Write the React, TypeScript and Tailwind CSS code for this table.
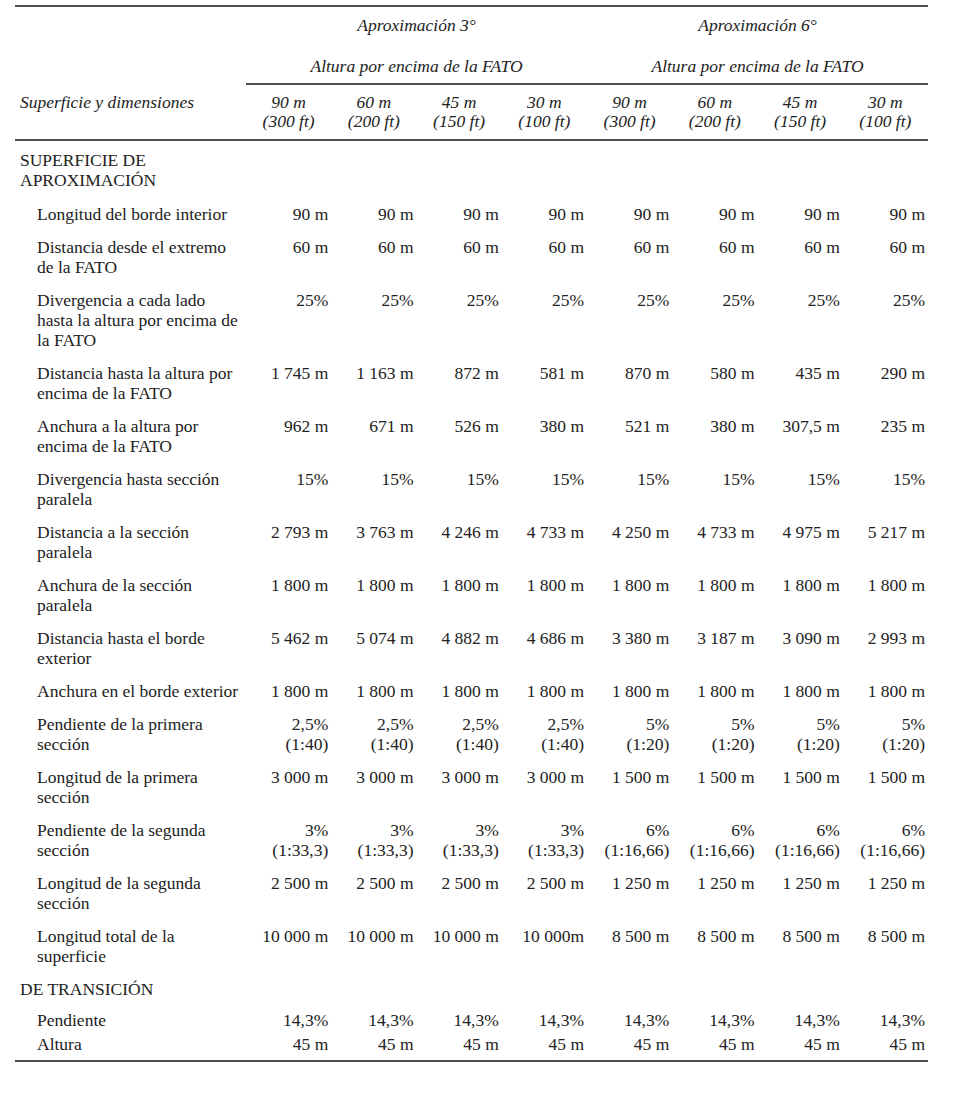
import React from 'react';

type Row = {
  label: React.ReactNode;
  values: React.ReactNode[];
};

const nb = (s: string) => s.replace(/ /g, '\u00a0');

const repeat = (a: string, b: string) => [a, a, a, a, b, b, b, b].map(nb);

const two = (a: string, b: string) => (
  <>
    {a}
    <br />
    {b}
  </>
);

const rows: Row[] = [
  { label: 'Longitud del borde interior', values: repeat('90 m', '90 m') },
  { label: two('Distancia desde el extremo', 'de la FATO'), values: repeat('60 m', '60 m') },
  {
    label: (
      <>
        Divergencia a cada lado
        <br />
        hasta la altura por encima de
        <br />
        la FATO
      </>
    ),
    values: repeat('25%', '25%'),
  },
  {
    label: two('Distancia hasta la altura por', 'encima de la FATO'),
    values: ['1 745 m', '1 163 m', '872 m', '581 m', '870 m', '580 m', '435 m', '290 m'].map(nb),
  },
  {
    label: two('Anchura a la altura por', 'encima de la FATO'),
    values: ['962 m', '671 m', '526 m', '380 m', '521 m', '380 m', '307,5 m', '235 m'].map(nb),
  },
  { label: two('Divergencia hasta sección', 'paralela'), values: repeat('15%', '15%') },
  {
    label: two('Distancia a la sección', 'paralela'),
    values: ['2 793 m', '3 763 m', '4 246 m', '4 733 m', '4 250 m', '4 733 m', '4 975 m', '5 217 m'].map(nb),
  },
  { label: two('Anchura de la sección', 'paralela'), values: repeat('1 800 m', '1 800 m') },
  {
    label: two('Distancia hasta el borde', 'exterior'),
    values: ['5 462 m', '5 074 m', '4 882 m', '4 686 m', '3 380 m', '3 187 m', '3 090 m', '2 993 m'].map(nb),
  },
  { label: 'Anchura en el borde exterior', values: repeat('1 800 m', '1 800 m') },
  {
    label: two('Pendiente de la primera', 'sección'),
    values: [0, 1, 2, 3, 4, 5, 6, 7].map((i) => (i < 4 ? two('2,5%', '(1:40)') : two('5%', '(1:20)'))),
  },
  { label: two('Longitud de la primera', 'sección'), values: repeat('3 000 m', '1 500 m') },
  {
    label: two('Pendiente de la segunda', 'sección'),
    values: [0, 1, 2, 3, 4, 5, 6, 7].map((i) => (i < 4 ? two('3%', '(1:33,3)') : two('6%', '(1:16,66)'))),
  },
  { label: two('Longitud de la segunda', 'sección'), values: repeat('2 500 m', '1 250 m') },
  {
    label: two('Longitud total de la', 'superficie'),
    values: ['10 000 m', '10 000 m', '10 000 m', '10 000m', '8 500 m', '8 500 m', '8 500 m', '8 500 m'].map(nb),
  },
];

const heights = [
  ['90 m', '(300 ft)'],
  ['60 m', '(200 ft)'],
  ['45 m', '(150 ft)'],
  ['30 m', '(100 ft)'],
];

const line = 'border-[#4d4d4d]';

export default function App() {
  return (
    <div className="min-h-screen bg-white pt-[5px] pl-[15px] font-['Liberation_Serif',serif] text-[17.5px] leading-[20px] text-[#222]">
      <table className="w-[913px] table-fixed border-collapse">
        <colgroup>
          <col className="w-[231px]" />
          {[0, 1, 2, 3, 4, 5, 6, 7].map((i) => (
            <col key={i} />
          ))}
        </colgroup>
        <thead className="italic">
          {/* Grupo de aproximación */}
          <tr>
            <th className={`border-t-2 ${line} pt-[8px] pb-[10px]`} />
            <th colSpan={4} className={`border-t-2 ${line} pt-[8px] pb-[10px] text-center font-normal`}>
              Aproximación 3°
            </th>
            <th colSpan={4} className={`border-t-2 ${line} pt-[8px] pb-[10px] text-center font-normal`}>
              Aproximación 6°
            </th>
          </tr>
          <tr>
            <th className="pt-[11px] pb-[7px]" />
            <th colSpan={4} className={`border-b-2 ${line} pt-[11px] pb-[7px] text-center font-normal`}>
              Altura por encima de la FATO
            </th>
            <th colSpan={4} className={`border-b-2 ${line} pt-[11px] pb-[7px] text-center font-normal`}>
              Altura por encima de la FATO
            </th>
          </tr>
          <tr>
            <th className={`border-b-2 ${line} pt-[8px] pb-[8px] pl-[5px] text-left align-top font-normal whitespace-nowrap`}>
              Superficie y dimensiones
            </th>
            {[...heights, ...heights].map(([m, ft], i) => (
              <th
                key={i}
                className={`border-b-2 ${line} pt-[8px] pb-[8px] text-center align-top font-normal leading-[19px] whitespace-nowrap`}
              >
                {nb(m)}
                <br />
                {nb(ft)}
              </th>
            ))}
          </tr>
        </thead>
        <tbody>
          <tr>
            <td colSpan={9} className="pt-[9px] pb-[7px] pl-[5px] align-top">
              SUPERFICIE DE
              <br />
              APROXIMACIÓN
            </td>
          </tr>
          {rows.map((row, i) => (
            <tr key={i}>
              <td className="pt-[7px] pb-[6px] pl-[22px] align-top whitespace-nowrap">{row.label}</td>
              {row.values.map((v, j) => (
                <td key={j} className="pt-[7px] pb-[6px] pr-[3px] text-right align-top whitespace-nowrap">
                  {v}
                </td>
              ))}
            </tr>
          ))}
          <tr>
            <td colSpan={9} className="pt-[7px] pb-[6px] pl-[5px] align-top">
              DE TRANSICIÓN
            </td>
          </tr>
          <tr>
            <td className="pt-[5px] pb-[2px] pl-[22px] align-top">Pendiente</td>
            {repeat('14,3%', '14,3%').map((v, j) => (
              <td key={j} className="pt-[5px] pb-[2px] pr-[3px] text-right align-top whitespace-nowrap">
                {v}
              </td>
            ))}
          </tr>
          <tr>
            <td className={`border-b-2 ${line} pt-[2px] pb-[6px] pl-[22px] align-top`}>Altura</td>
            {repeat('45 m', '45 m').map((v, j) => (
              <td
                key={j}
                className={`border-b-2 ${line} pt-[2px] pb-[6px] pr-[3px] text-right align-top whitespace-nowrap`}
              >
                {v}
              </td>
            ))}
          </tr>
        </tbody>
      </table>
    </div>
  );
}
